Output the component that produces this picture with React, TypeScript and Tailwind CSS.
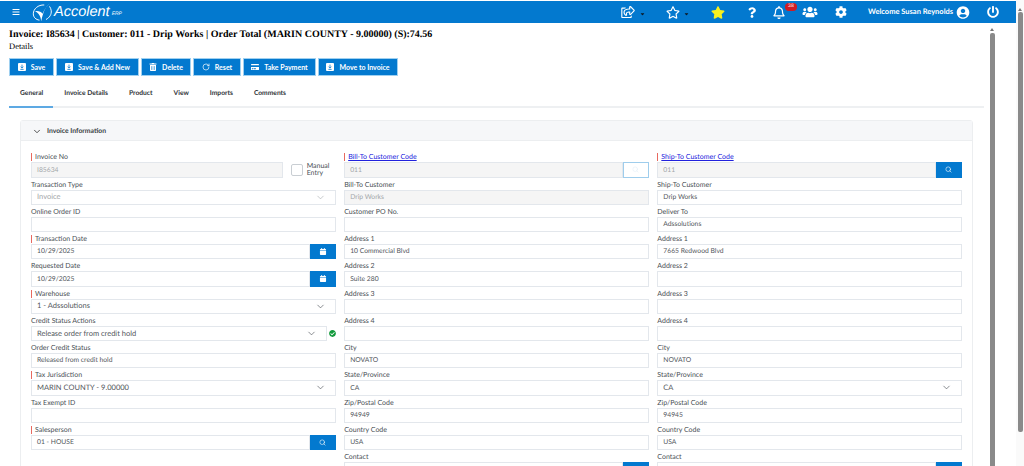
import { ChevronDown, Search, RotateCw } from "lucide-react";
import {
  FaBars,
  FaCalendar,
  FaCaretDown,
  FaCheckCircle,
  FaCog,
  FaCreditCard,
  FaPowerOff,
  FaQuestion,
  FaRegBell,
  FaRegShareSquare,
  FaRegStar,
  FaStar,
  FaTrashAlt,
  FaUserCircle,
  FaUsers,
} from "react-icons/fa";

const SaveIcon = () => (
  <svg viewBox="0 0 10 10" className="h-2 w-2">
    <rect x="0" y="0" width="10" height="10" rx="1.2" fill="#fff" />
    <path d="M5 2v4M3.3 4.6 5 6.4l1.7-1.8M3 8h4" stroke="#0379cf" strokeWidth="1" fill="none" />
  </svg>
);

const buttons = [
  { label: "Save", width: "w-[45px]", icon: <SaveIcon /> },
  { label: "Save & Add New", width: "w-[83px]", icon: <SaveIcon /> },
  { label: "Delete", width: "w-[50px]", icon: <FaTrashAlt className="h-2 w-2" /> },
  { label: "Reset", width: "w-[48px]", icon: <RotateCw className="h-2 w-2" /> },
  { label: "Take Payment", width: "w-[73px]", icon: <FaCreditCard className="h-2 w-2" /> },
  { label: "Move to Invoice", width: "w-[80px]", icon: <SaveIcon /> },
];

const tabs = ["General", "Invoice Details", "Product", "View", "Imports", "Comments"];

const Label = ({ text, required, link }: { text: string; required?: boolean; link?: boolean }) => (
  <div className="flex h-[11.3px] items-end pb-[1px] text-[7px] leading-[8px] text-[#4a4f55]">
    {required && <span className="mr-[3px] h-[8px] w-px bg-[#e8695f]" />}
    {link ? <span className="text-[#2222dd] underline">{text}</span> : text}
  </div>
);

const Box = ({ value, disabled, select, big }: { value?: string; disabled?: boolean; select?: boolean; big?: boolean }) => (
  <div
    className={`flex h-[15.3px] min-w-0 flex-1 items-center justify-between border border-[#e3e7ec] pl-[5px] pr-[9px] leading-none ${
      big ? "text-[7.5px]" : "text-[6.75px]"
    } ${disabled ? "text-[#a3a6a9]" : "text-[#51565b]"} ${disabled && !select ? "bg-[#f5f5f5]" : "bg-white"}`}
  >
    <span>{value}</span>
    {select && <ChevronDown className={`h-[11px] w-[11px] ${disabled ? "text-[#a9adb1]" : "text-[#4a4f55]"}`} strokeWidth={1.4} />}
  </div>
);

const BlueAddon = ({ icon }: { icon: "search" | "calendar" }) => (
  <div className="flex h-[15.3px] w-[26px] shrink-0 items-center justify-center bg-[#0379cf] text-white">
    {icon === "search" ? <Search className="h-[7px] w-[7px]" /> : <FaCalendar className="h-[7px] w-[8px]" />}
  </div>
);

const Field = ({ label, required, link, children }: { label: string; required?: boolean; link?: boolean; children: React.ReactNode }) => (
  <div className="h-[27.25px]">
    <Label text={label} required={required} link={link} />
    <div className="flex items-center">{children}</div>
  </div>
);

const Plain = ({ label, value, required, disabled, select, big }: { label: string; value?: string; required?: boolean; disabled?: boolean; select?: boolean; big?: boolean }) => (
  <Field label={label} required={required}>
    <Box value={value} disabled={disabled} select={select} big={big} />
  </Field>
);

const Logo = () => (
  <div className="ml-[12px] flex items-center">
    <svg viewBox="0 0 24 22" className="h-[21px] w-[21px]" fill="none">
      <path d="M14 2.4C7 2 1.5 7 1.5 12.5c0 4 3 6.8 7 7.2" stroke="#fff" strokeWidth="1.1" />
      <path d="M16 19c4-2 6.5-6 6-10-.2-2-1-3.5-2-5" stroke="#fff" strokeWidth="1.1" />
      <path d="M20.5 0.5C15 5 13 10 10.5 21 10 15 8 12 3.5 9.5c4-.5 7 .5 8.5 3 2-5 5-9 8.5-12Z" fill="#fff" />
    </svg>
    <span className="ml-[1px] font-['Liberation_Sans',sans-serif] text-[14.5px] italic leading-none text-white">Accolent</span>
    <span className="ml-[2px] mt-[5px] font-['Liberation_Sans',sans-serif] text-[5px] italic leading-none text-white">ERP</span>
  </div>
);

const Header = () => (
  <header className="mt-px flex h-[22px] items-center bg-[#0379cf] text-white">
    <FaBars className="ml-[12px] h-[8px] w-[8px]" />
    <Logo />
    <div className="ml-auto flex items-center">
      <FaRegShareSquare className="h-[12px] w-[14px]" />
      <FaCaretDown className="ml-[5px] mt-[3px] h-[6px] w-[5px] text-[#0d1a26]" />
      <FaRegStar className="ml-[21px] h-[13px] w-[14px]" />
      <FaCaretDown className="ml-[4px] mt-[3px] h-[6px] w-[5px] text-[#0d1a26]" />
      <FaStar className="ml-[22px] h-[13px] w-[14px] text-[#f7f01f]" />
      <FaQuestion className="ml-[23px] h-[13px] w-[8px]" />
      <div className="relative ml-[17px]">
        <FaRegBell className="h-[13px] w-[12px]" />
        <span className="absolute -top-[3px] left-[12px] flex h-[8px] w-[12px] items-center justify-center rounded-full bg-[#d01c24] text-[5px] leading-none text-white">
          38
        </span>
      </div>
      <FaUsers className="ml-[17px] h-[12px] w-[16px]" />
      <FaCog className="ml-[17px] h-[12px] w-[12px]" />
      <span className="ml-[21px] w-[86px] whitespace-nowrap text-[7.5px] font-bold leading-none">Welcome Susan Reynolds</span>
      <FaUserCircle className="ml-[2px] h-[13px] w-[14px]" />
      <FaPowerOff className="ml-[17px] mr-[17px] h-[12px] w-[12px]" />
    </div>
  </header>
);

export default function App() {
  return (
    <div className="flex h-[466px] w-[1024px] overflow-hidden bg-white font-['Lato','Noto_Sans',sans-serif] [text-rendering:geometricPrecision]">
      <div className="flex min-w-0 flex-1 flex-col">
        <Header />
        <div className="flex min-h-0 flex-1">
          <main className="min-w-0 flex-1 overflow-hidden pl-[9px] pr-[5px]">
            <h1 className="mt-[6px] font-['Liberation_Serif',serif] text-[10px] font-bold leading-[12px] text-black">
              Invoice: I85634 | Customer: 011 - Drip Works | Order Total (MARIN COUNTY - 9.00000) (S):74.56
            </h1>
            <p className="font-['Liberation_Serif',serif] text-[8.5px] leading-[10px] text-black">Details</p>

            <div className="mt-[7px] flex gap-[2px]">
              {buttons.map((b) => (
                <button
                  key={b.label}
                  className={`flex h-[18px] items-center justify-center gap-[5px] border border-[#9fd0f0] bg-[#0379cf] text-[7px] font-bold leading-none text-white ${b.width}`}
                >
                  {b.icon}
                  {b.label}
                </button>
              ))}
            </div>

            <nav className="mt-[8px] flex h-[24px] gap-[21px] border-b-2 border-[#eef0f2] px-[11px] pt-[6px] text-[6.7px] font-bold leading-none text-[#2f3438]">
              {tabs.map((t, i) => (
                <span key={t} className="relative h-fit">
                  {t}
                  {i === 0 && <span className="absolute -left-[11px] -right-[10px] top-[16px] h-[2px] bg-[#5da9e3]" />}
                </span>
              ))}
            </nav>

            <section className="mx-[11px] mt-[12px] h-[400px] rounded-t-[3px] border border-[#eceef0]">
              <div className="flex h-[20px] items-center border-b border-[#eceef0] bg-[#f6f7f9] pl-[11px] pt-[1px] text-[6.8px] font-bold leading-none text-[#3a3f44]">
                <ChevronDown className="mr-[5px] h-[11px] w-[10px] text-[#333]" strokeWidth={2} />
                Invoice Information
              </div>

              <div className="grid grid-cols-3 gap-x-[8.5px] px-[10px] pt-[10px]">
                <div>
                  <Field label="Invoice No" required>
                    <Box value="I85634" disabled />
                    <div className="ml-[8px] h-[12px] w-[12px] shrink-0 rounded-[2px] border border-[#c9ced3]" />
                    <div className="ml-[4px] w-[29px] shrink-0 text-[7px] leading-[6.5px] text-[#4a4f55]">Manual Entry</div>
                  </Field>
                  <Plain label="Transaction Type" value="Invoice" disabled select big />
                  <Plain label="Online Order ID" />
                  <Field label="Transaction Date" required>
                    <Box value="10/29/2025" />
                    <BlueAddon icon="calendar" />
                  </Field>
                  <Field label="Requested Date">
                    <Box value="10/29/2025" />
                    <BlueAddon icon="calendar" />
                  </Field>
                  <Plain label="Warehouse" value="1 - Adssolutions" required select big />
                  <Field label="Credit Status Actions">
                    <Box value="Release order from credit hold" select big />
                    <FaCheckCircle className="ml-[2px] h-[7px] w-[7px] shrink-0 text-[#129a3c]" />
                  </Field>
                  <Plain label="Order Credit Status" value="Released from credit hold" />
                  <Plain label="Tax Jurisdiction" value="MARIN COUNTY - 9.00000" required select big />
                  <Plain label="Tax Exempt ID" />
                  <Field label="Salesperson" required>
                    <Box value="01 - HOUSE" />
                    <BlueAddon icon="search" />
                  </Field>
                </div>

                <div>
                  <Field label="Bill-To Customer Code" required link>
                    <Box value="011" disabled />
                    <div className="flex h-[15.3px] w-[26px] shrink-0 items-center justify-center border border-[#9fcdec] bg-white text-[#e3eef7]">
                      <Search className="h-[7px] w-[7px]" />
                    </div>
                  </Field>
                  <Plain label="Bill-To Customer" value="Drip Works" disabled />
                  <Plain label="Customer PO No." />
                  <Plain label="Address 1" value="10 Commercial Blvd" />
                  <Plain label="Address 2" value="Suite 280" />
                  <Plain label="Address 3" />
                  <Plain label="Address 4" />
                  <Plain label="City" value="NOVATO" />
                  <Plain label="State/Province" value="CA" />
                  <Plain label="Zip/Postal Code" value="94949" />
                  <Plain label="Country Code" value="USA" />
                  <Field label="Contact">
                    <Box />
                    <BlueAddon icon="search" />
                  </Field>
                </div>

                <div>
                  <Field label="Ship-To Customer Code" required link>
                    <Box value="011" disabled />
                    <BlueAddon icon="search" />
                  </Field>
                  <Plain label="Ship-To Customer" value="Drip Works" />
                  <Plain label="Deliver To" value="Adssolutions" />
                  <Plain label="Address 1" value="7665 Redwood Blvd" />
                  <Plain label="Address 2" />
                  <Plain label="Address 3" />
                  <Plain label="Address 4" />
                  <Plain label="City" value="NOVATO" />
                  <Plain label="State/Province" value="CA" select big />
                  <Plain label="Zip/Postal Code" value="94945" />
                  <Plain label="Country Code" value="USA" />
                  <Field label="Contact">
                    <Box />
                    <BlueAddon icon="search" />
                  </Field>
                </div>
              </div>
            </section>
          </main>

          {/* inner scrollbar */}
          <div className="mr-[21px] flex w-[6px] shrink-0 flex-col items-center pt-[5px]">
            <span className="h-0 w-0 border-x-[2px] border-b-[3px] border-x-transparent border-b-[#777]" />
            <div className="mt-[2px] w-[5px] flex-1 rounded-t-[2px] bg-[#8a8a8a]" />
          </div>
        </div>
      </div>

      {/* window scrollbar */}
      <div className="flex w-[8px] shrink-0 flex-col items-center bg-[#fafafa] pt-[8px]">
        <span className="h-0 w-0 border-x-[2px] border-b-[3px] border-x-transparent border-b-[#777]" />
        <div className="mt-[1px] h-[420px] w-[5px] rounded-[2px] bg-[#8a8a8a]" />
      </div>
    </div>
  );
}
